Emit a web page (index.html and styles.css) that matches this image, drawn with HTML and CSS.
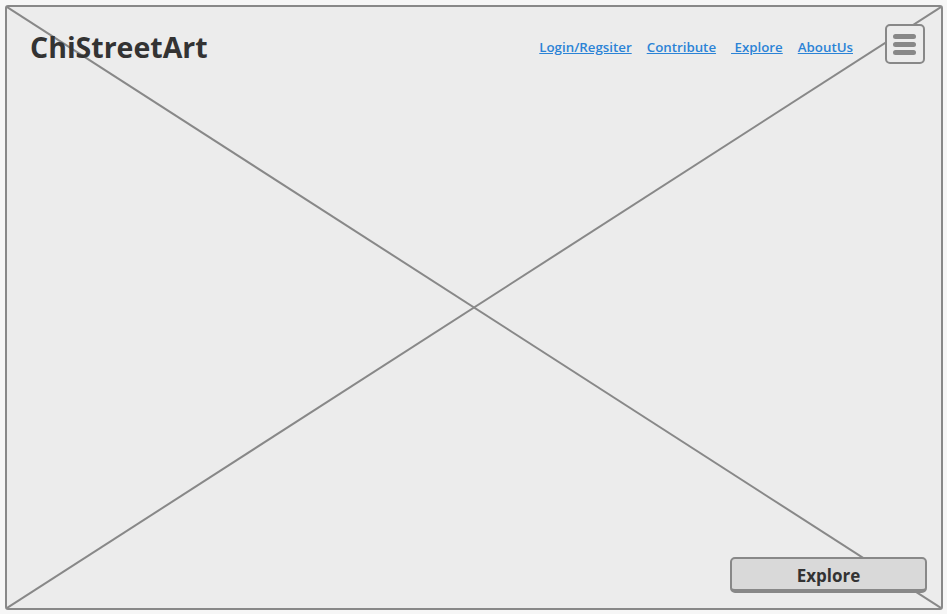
FILE: index.html
```html
<!DOCTYPE html>
<html>
<head>
<meta charset="utf-8">
<link rel="stylesheet" href="styles.css">
</head>
<body>
<div class="frame">
  <svg class="cross" viewBox="0 0 100 100" preserveAspectRatio="none">
    <line x1="0" y1="0" x2="100" y2="100" vector-effect="non-scaling-stroke"/>
    <line x1="0" y1="100" x2="100" y2="0" vector-effect="non-scaling-stroke"/>
  </svg>
  <header class="top">
    <h1 class="logo">ChiStreetArt</h1>
    <nav class="nav">
      <a href="#">Login/Regsiter</a>
      <a href="#">Contribute</a>
      <a href="#">&nbsp;Explore</a>
      <a href="#">AboutUs</a>
    </nav>
    <button class="menu" aria-label="menu">
      <span></span><span></span><span></span>
    </button>
  </header>
  <div class="spacer"></div>
  <footer class="bottom">
    <button class="explore">Explore</button>
  </footer>
</div>
</body>
</html>
```
FILE: styles.css
```css
html, body {
  margin: 0;
  padding: 0;
  background: #f6f6f6;
}
body {
  width: 947px;
  height: 614px;
  overflow: hidden;
  font-family: "Open Sans", "DejaVu Sans", sans-serif;
}
.frame {
  position: relative;
  box-sizing: border-box;
  margin: 5px 0 0 5px;
  width: 938px;
  height: 605px;
  border: 2px solid #888;
  border-radius: 3px;
  background: #ececec;
  display: flex;
  flex-direction: column;
}
.cross {
  position: absolute;
  left: 0;
  top: 0;
  width: 100%;
  height: 100%;
}
.cross line {
  stroke: #888;
  stroke-width: 2;
}
.top {
  position: relative;
  display: flex;
  align-items: flex-start;
  padding: 17px 16px 0 23px;
}
.logo {
  margin: 0;
  font-size: 28.5px;
  font-weight: 700;
  color: #333;
  flex: 1;
  line-height: 40px;
  padding-top: 3px;
}
.nav {
  display: flex;
  gap: 15px;
  margin-right: 32px;
  padding-top: 14px;
  line-height: 18px;
}
.nav a {
  color: #2b83d6;
  font-size: 13.3px;
  font-weight: 600;
  text-decoration: underline;
}
.menu {
  box-sizing: border-box;
  width: 40px;
  height: 40px;
  border: 2px solid #888;
  border-radius: 5px;
  background: #ececec;
  padding: 0 0 0 6px;
  display: flex;
  flex-direction: column;
  justify-content: center;
  gap: 3px;
}
.menu span {
  display: block;
  width: 23px;
  height: 5px;
  border-radius: 3px;
  background: #888;
}
.spacer {
  flex: 1;
}
.bottom {
  position: relative;
  display: flex;
  justify-content: flex-end;
  padding: 0 14px 15px 0;
}
.explore {
  box-sizing: border-box;
  width: 197px;
  height: 36px;
  border: 2px solid #888;
  border-bottom-width: 4px;
  border-radius: 5px;
  background: #d9d9d9;
  font-family: "Open Sans", "DejaVu Sans", sans-serif;
  font-size: 17px;
  font-weight: 700;
  color: #333;
  padding: 2px 0 0;
}
```
